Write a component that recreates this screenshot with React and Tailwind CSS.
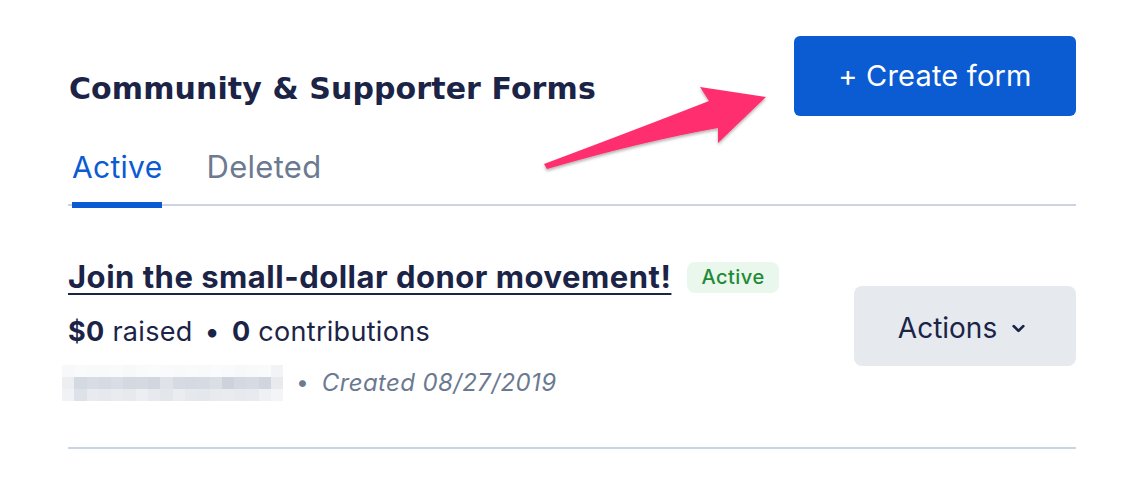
import { ChevronDown } from 'lucide-react';

const BLUR_ROWS = [
    ['#f7f8fa', '#f9fafb', '#f8f9fb', '#f8f9fa', '#f9fafb', '#f7f8fa', '#f9fafb', '#fafbfc', '#f9fafb', '#f8f9fb', '#f9fafb', '#f8f9fa', '#fafbfc', '#f9fafb', '#f7f8fa', '#f8f9fa', '#f9fafb', '#f2f3f5'],
    ['#eceef2', '#d4d9e2', '#d8dce4', '#d6dbe3', '#d9dde5', '#d3d8e1', '#d4d9e2', '#d1d6df', '#dfe2e8', '#d6dae2', '#d5d9e1', '#d6dae2', '#dadee5', '#cdd2dc', '#d4d8e1', '#d6dae2', '#d1d5de', '#e8eaee'],
    ['#f1f2f5', '#dde1e8', '#e8eaef', '#e5e8ed', '#e9ebef', '#e7e9ee', '#eceef2', '#e6e9ee', '#e3e6eb', '#eaecf0', '#e5e8ec', '#e4e7ec', '#e8eaee', '#e9ebef', '#e6e9ed', '#e8eaef', '#eef0f3', '#f3f4f6'],
];

export default function App() {
    return (
        <div className="relative h-[484px] w-[1144px] overflow-hidden bg-white px-[68px] pt-[36px] font-['Inter',sans-serif] text-[#1b2447]">
            <div className="flex items-start justify-between">
                <h2 className="ml-[1px] mt-[35px] font-['DejaVu_Sans',sans-serif] text-[30px] font-bold leading-[36px] tracking-[0.1px] text-[#1b2447]">
                    Community &amp; Supporter Forms
                </h2>
                <button
                    type="button"
                    className="flex h-[80px] w-[282px] items-center justify-center rounded-[6px] bg-[#0b5bd3] text-[29px] font-normal tracking-[0.2px] text-white"
                >
                    + Create form
                </button>
            </div>

            <div className="flex border-b-2 border-[#cbd5e1]">
                <div className="-mb-[4px] ml-[4px] border-b-[6px] border-[#0b5bd3] pb-[15px] pt-[31px] text-[30px] leading-[40px] tracking-[0.3px] text-[#0b5bd3]">
                    Active
                </div>
                <div className="ml-[44px] pb-[15px] pt-[31px] text-[31px] leading-[40px] tracking-[0.3px] text-[#6b7a90]">
                    Deleted
                </div>
            </div>

            <div className="flex items-start justify-between border-b-2 border-[#cbd5e1] pb-[46px] pt-[53px]">
                <div>
                    <div className="flex items-center">
                        <a href="#" className="text-[31px] font-bold leading-[36px] tracking-[0.5px] text-[#1b2447] underline decoration-2 underline-offset-[5px]">
                            Join the small-dollar donor movement!
                        </a>
                        <span className="ml-[16px] rounded-[8px] bg-[#eaf7ed] px-[14px] py-[2px] text-[20px] font-medium leading-[27px] tracking-[0.5px] text-[#1f8a36]">
                            Active
                        </span>
                    </div>
                    <p className="mt-[19px] text-[27px] leading-[36px] tracking-[0.3px] text-[#1b2447]">
                        <span className="font-bold">$0</span> raised <span className="mx-[4px]">•</span> <span className="font-bold">0</span> contributions
                    </p>
                    <div className="mt-[14px] flex h-[37px] items-center">
                        <div className="-ml-[6px] flex flex-col">
                            {BLUR_ROWS.map((row, r) => (
                                <div key={r} className="flex h-[12px]">
                                    {row.map((c, i) => (
                                        <div key={i} className="h-full w-[12.3px]" style={{ backgroundColor: c }} />
                                    ))}
                                </div>
                            ))}
                        </div>
                        <span className="ml-[13px] text-[22px] text-[#6b7a90]">•</span>
                        <span className="ml-[13px] text-[24px] italic tracking-[0.4px] text-[#6b7a90]">Created 08/27/2019</span>
                    </div>
                </div>
                <button
                    type="button"
                    className="mt-[27px] flex h-[80px] w-[222px] items-center justify-center gap-[12px] rounded-[8px] bg-[#e6e9ee] pt-[3px] text-[28px] text-[#1b2447]"
                >
                    <span className="-ml-[4px]">Actions</span>
                    <ChevronDown size={19} strokeWidth={3.5} className="mt-[2px]" />
                </button>
            </div>

            <svg
                className="pointer-events-none absolute left-0 top-0"
                width="1144"
                height="484"
                viewBox="0 0 1144 484"
            >
                <defs>
                    <filter id="arrow-shadow" x="-10%" y="-10%" width="120%" height="130%">
                        <feDropShadow dx="0" dy="2" stdDeviation="1.5" floodColor="#000" floodOpacity="0.3" />
                    </filter>
                </defs>
                <path
                    d="M544 164 Q 640 128 709 101 L 700 87 L 766 97 L 718 143 L 718 128 Q 640 142 547 169 Z"
                    fill="#ff2d6e"
                    filter="url(#arrow-shadow)"
                />
            </svg>
        </div>
    );
}
